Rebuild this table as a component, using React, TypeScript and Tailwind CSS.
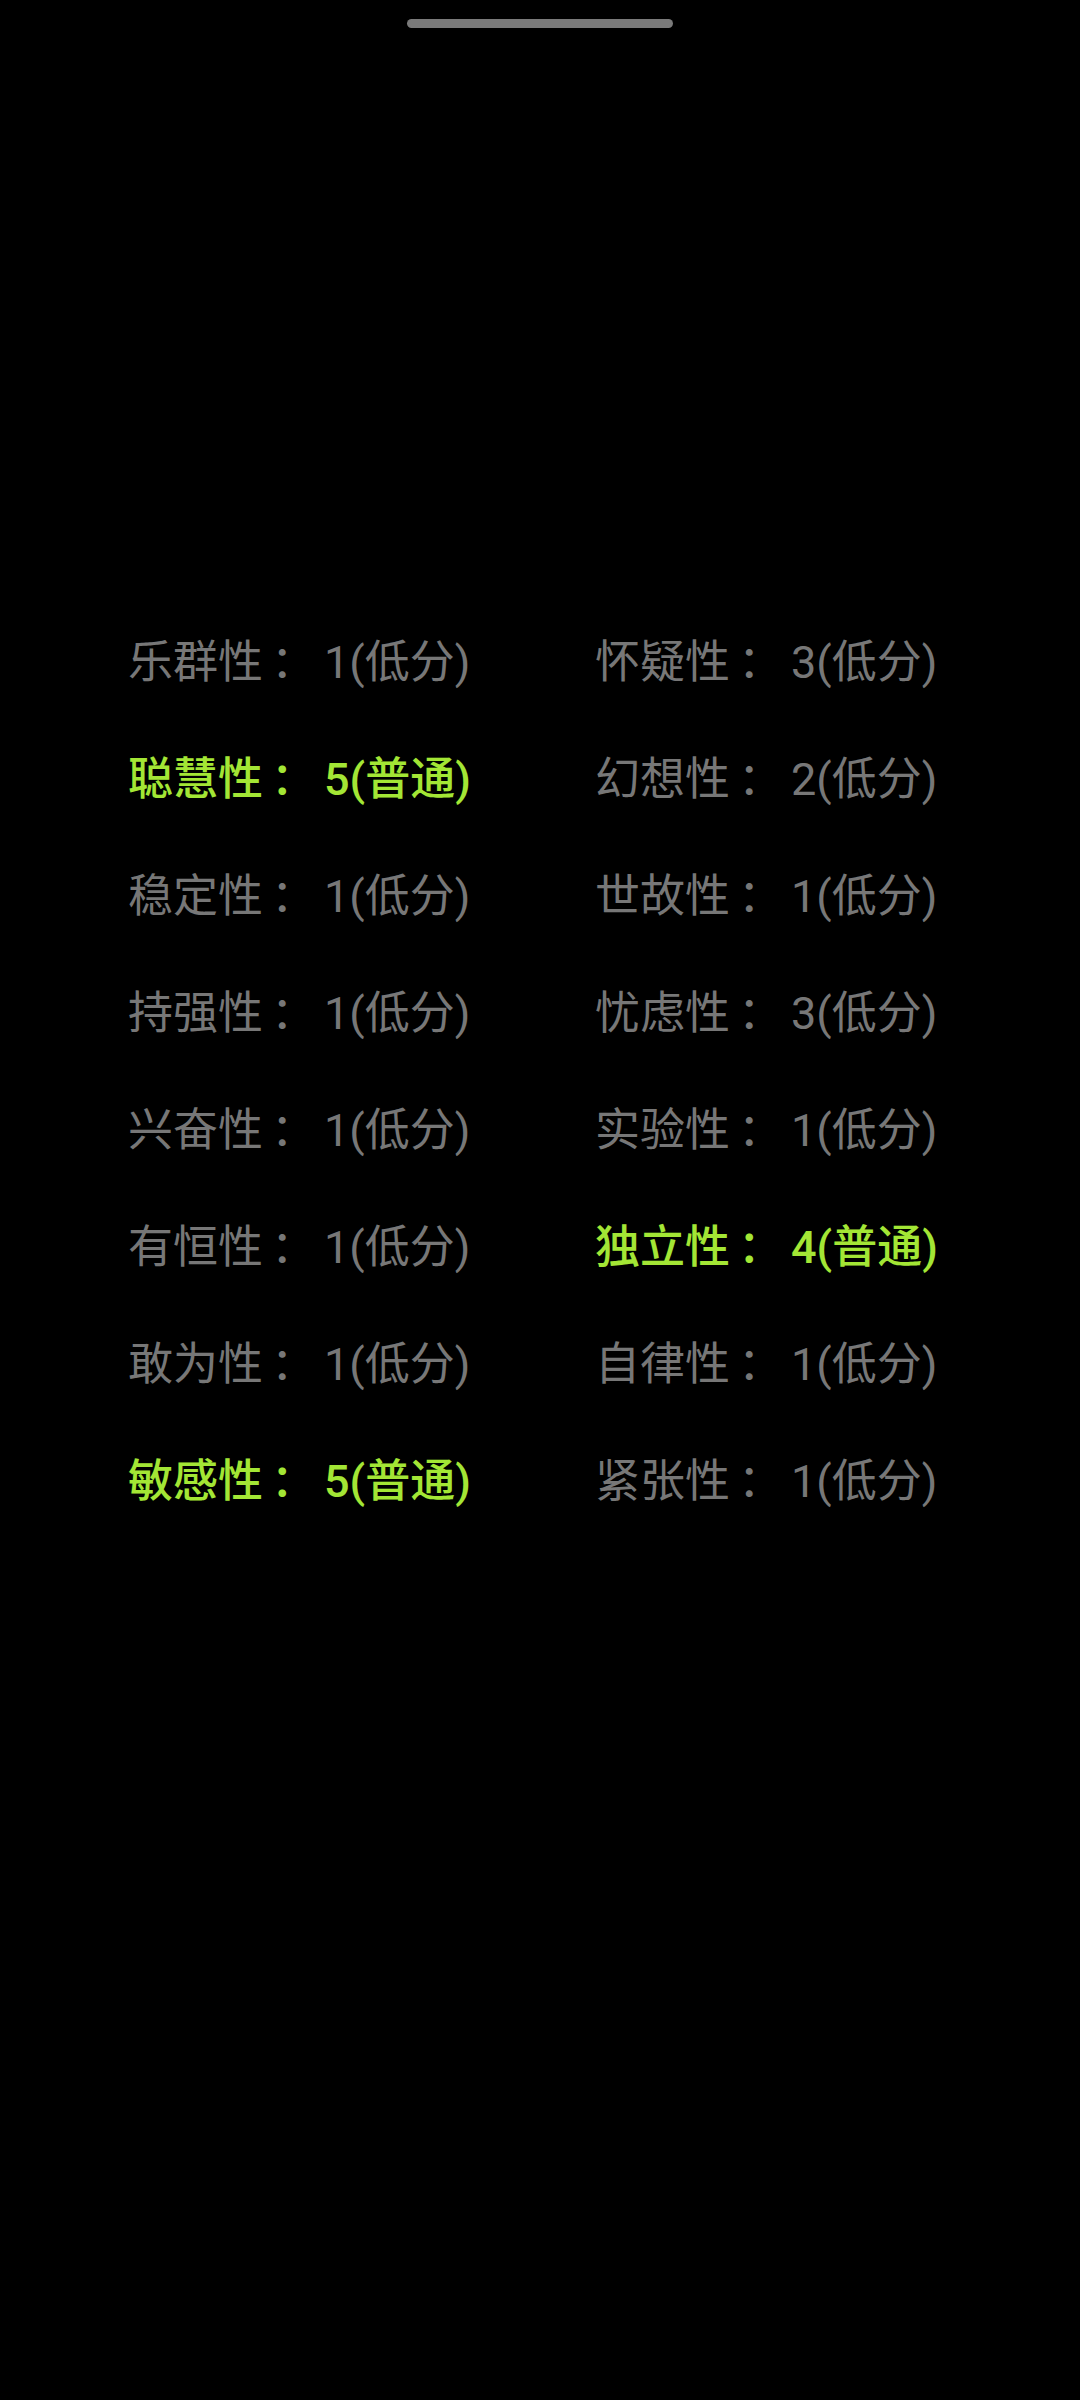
import React from 'react';

const traits: { name: string; score: number; level: string }[] = [
  { name: '乐群性', score: 1, level: '低分' },
  { name: '怀疑性', score: 3, level: '低分' },
  { name: '聪慧性', score: 5, level: '普通' },
  { name: '幻想性', score: 2, level: '低分' },
  { name: '稳定性', score: 1, level: '低分' },
  { name: '世故性', score: 1, level: '低分' },
  { name: '持强性', score: 1, level: '低分' },
  { name: '忧虑性', score: 3, level: '低分' },
  { name: '兴奋性', score: 1, level: '低分' },
  { name: '实验性', score: 1, level: '低分' },
  { name: '有恒性', score: 1, level: '低分' },
  { name: '独立性', score: 4, level: '普通' },
  { name: '敢为性', score: 1, level: '低分' },
  { name: '自律性', score: 1, level: '低分' },
  { name: '敏感性', score: 5, level: '普通' },
  { name: '紧张性', score: 1, level: '低分' },
];

export default function App() {
  return (
    <div
      className="w-[1080px] h-[2400px] bg-black flex flex-col"
      style={{ fontFamily: 'Roboto, "Noto Sans CJK SC", sans-serif' }}
    >
      {/* drag handle */}
      <div className="pt-[19px] flex justify-center">
        <div className="w-[266px] h-[9px] rounded-full bg-[#7a7a7a]" />
      </div>

      <div className="mt-[576px] pl-[128px] grid grid-cols-[467px_auto]">
        {traits.map((t) => {
          const normal = t.level === '普通';
          return (
            <div
              key={t.name}
              className={`h-[117px] leading-[117px] text-[45px] whitespace-nowrap ${
                normal ? 'text-[#a3e635] font-medium' : 'text-[#777777]'
              }`}
            >
              {t.name}
              <span className="ml-[8px] mr-[8px]">：</span>
              {t.score}({t.level})
            </div>
          );
        })}
      </div>
    </div>
  );
}
